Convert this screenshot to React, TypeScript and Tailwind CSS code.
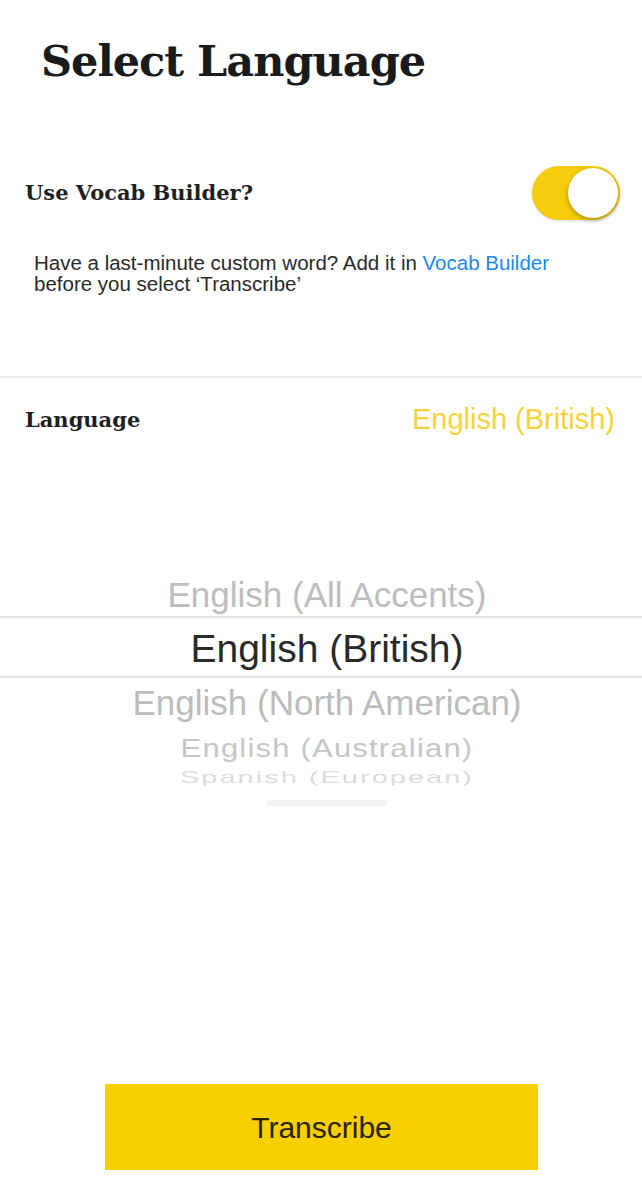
import { FC } from 'react';

const serif = 'font-["DejaVu_Serif","Liberation_Serif",serif]';
const sans = 'font-["Liberation_Sans",Arial,sans-serif]';

const Toggle: FC<{ on: boolean }> = ({ on }) => (
  <div
    className={`relative h-[54px] w-[88px] rounded-full ${on ? 'bg-[#f6cd0c]' : 'bg-[#e5e5e5]'} shadow-[0_1px_3px_rgba(0,0,0,0.15)]`}
  >
    <div
      className={`absolute top-[2px] h-[50px] w-[50px] rounded-full bg-white shadow-[0_2px_5px_rgba(0,0,0,0.3)] ${on ? 'right-[2px]' : 'left-[2px]'}`}
    />
  </div>
);

const PickerWheel: FC = () => (
  <div className={`flex flex-col items-center ${sans}`}>
    <div className="flex h-[46px] items-center pl-[12px] pt-[4px] text-[35px] text-[#bdbdbd]">English (All Accents)</div>
    <div className="flex h-[62px] w-full items-center justify-center border-y-2 border-[#e3e3e3] pl-[12px] pt-[4px] text-[39px] text-[#2a2a2a]">
      English (British)
    </div>
    <div className="flex h-[50px] items-center pl-[12px] text-[35px] text-[#bcbcbc]">English (North American)</div>
    <div className="flex h-[40px] scale-y-[0.85] items-center pl-[12px] tracking-[1.2px] text-[31px] text-[#c6c6c6]">
      English (Australian)
    </div>
    <div className="flex h-[20px] scale-y-[0.6] items-center pl-[12px] tracking-[2px] text-[29px] text-[#dcdcdc]">
      Spanish (European)
    </div>
    <div className="ml-[12px] mt-[12px] h-[6px] w-[120px] bg-[#f3f3f3]" />
  </div>
);

export default function App() {
  return (
    <div className="flex h-[1200px] w-[642px] flex-col bg-white">
      <h1 className={`${serif} pl-[41px] pt-[33px] text-[43px] font-bold leading-[56px] tracking-[-1px] text-[#1a1a1a]`}>
        Select Language
      </h1>

      <div className="mt-[77px] flex items-center justify-between pl-[25px] pr-[22px]">
        <span className={`${serif} text-[21px] font-bold text-[#1f1f1f]`}>Use Vocab Builder?</span>
        <Toggle on />
      </div>

      <p className={`${sans} mt-[32px] pl-[34px] text-[20.5px] leading-[21px] text-[#2a2a2a]`}>
        Have a last-minute custom word? Add it in <span className="text-[#1e88e5]">Vocab Builder</span>
        <br />
        before you select ‘Transcribe’
      </p>

      <div className="mt-[82px] border-t-2 border-[#efefef]" />

      <div className="flex h-[84px] items-center justify-between pl-[25px] pr-[27px]">
        <span className={`${serif} text-[21px] font-bold text-[#1f1f1f]`}>Language</span>
        <span className={`${sans} text-[29px] text-[#f7d23a]`}>English (British)</span>
      </div>

      <div className="mt-[108px]">
        <PickerWheel />
      </div>

      <button
        className={`${sans} mx-[105px] mb-[30px] mt-auto h-[86px] w-[433px] bg-[#f8cf00] text-[30px] text-[#2a2400]`}
      >
        Transcribe
      </button>
    </div>
  );
}
